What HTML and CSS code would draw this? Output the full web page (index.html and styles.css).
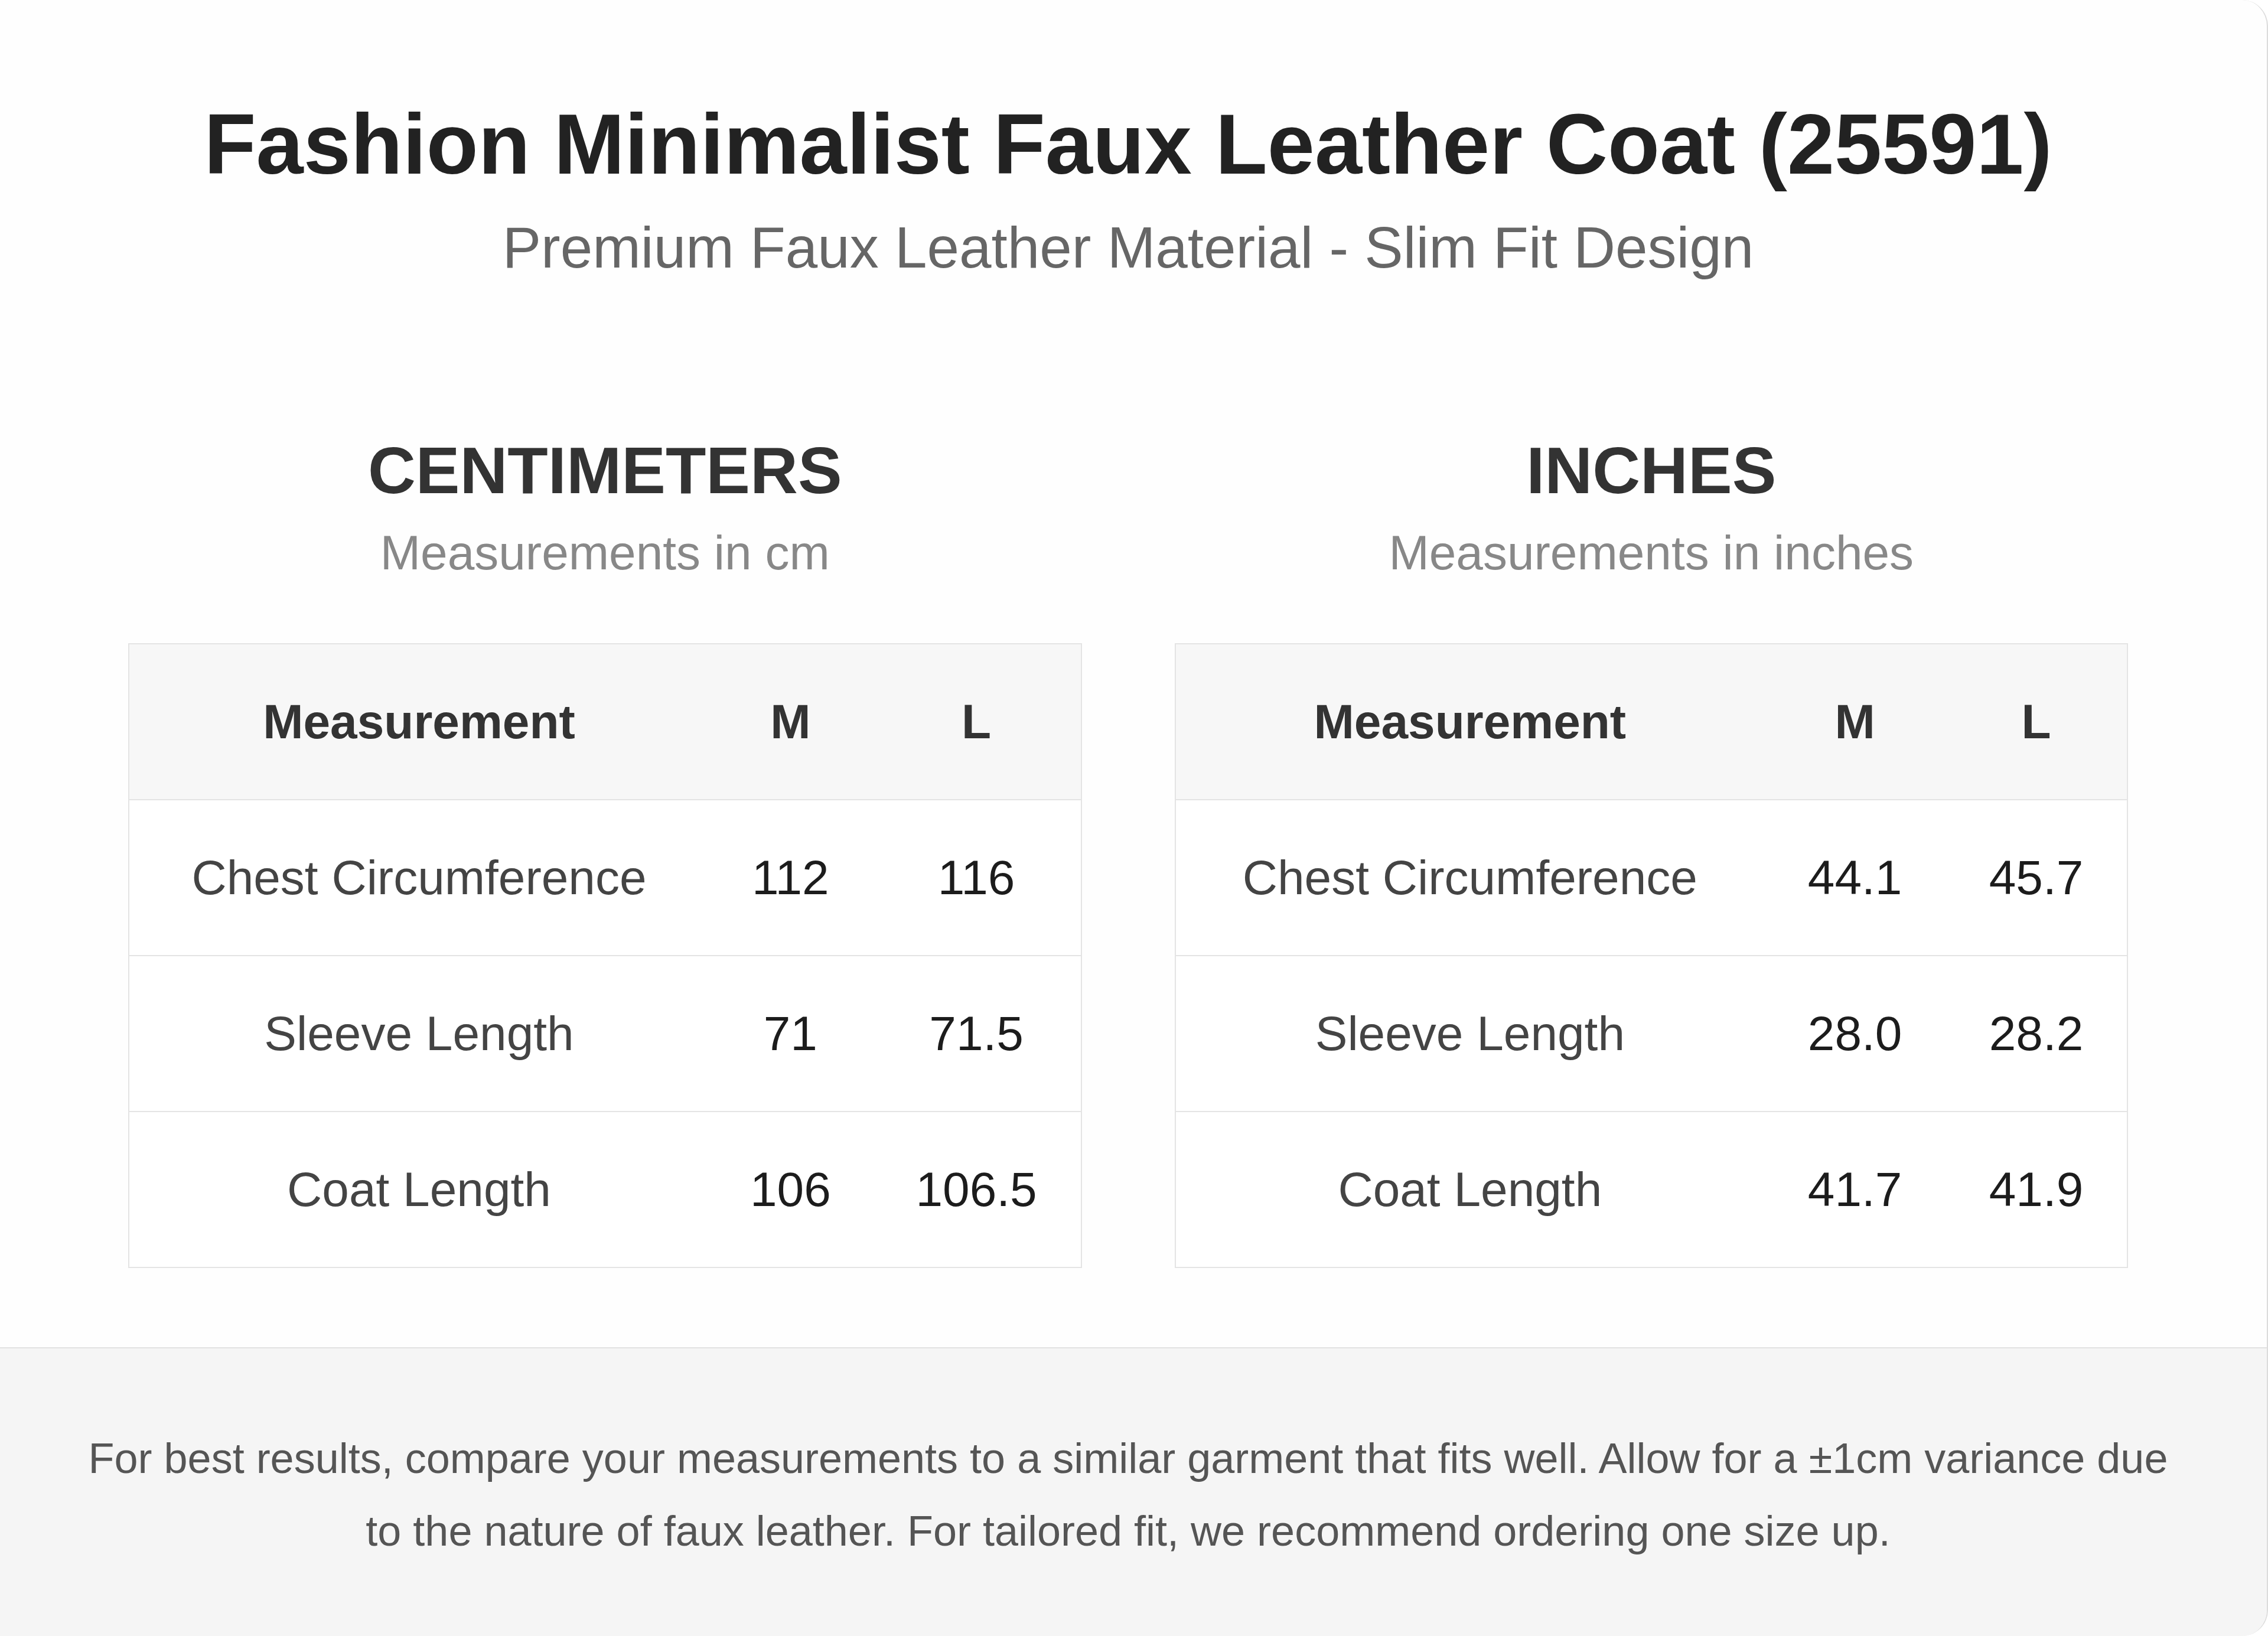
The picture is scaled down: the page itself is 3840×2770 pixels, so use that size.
FILE: index.html
```html
<!DOCTYPE html>
<html lang="en">
<head>
<meta charset="utf-8">
<title>Fashion Minimalist Faux Leather Coat (25591) - Size Chart</title>
<link rel="stylesheet" href="styles.css">
</head>
<body>
<div class="page">
  <header class="hero">
    <h1 class="title">Fashion Minimalist Faux Leather Coat (25591)</h1>
    <p class="subtitle">Premium Faux Leather Material - Slim Fit Design</p>
  </header>

  <main class="charts">
    <section class="chart">
      <h2 class="chart-title">CENTIMETERS</h2>
      <p class="chart-sub">Measurements in cm</p>
      <table class="size-table">
        <thead>
          <tr><th>Measurement</th><th>M</th><th>L</th></tr>
        </thead>
        <tbody>
          <tr><td class="label">Chest Circumference</td><td>112</td><td>116</td></tr>
          <tr><td class="label">Sleeve Length</td><td>71</td><td>71.5</td></tr>
          <tr><td class="label">Coat Length</td><td>106</td><td>106.5</td></tr>
        </tbody>
      </table>
    </section>

    <section class="chart">
      <h2 class="chart-title">INCHES</h2>
      <p class="chart-sub">Measurements in inches</p>
      <table class="size-table">
        <thead>
          <tr><th>Measurement</th><th>M</th><th>L</th></tr>
        </thead>
        <tbody>
          <tr><td class="label">Chest Circumference</td><td>44.1</td><td>45.7</td></tr>
          <tr><td class="label">Sleeve Length</td><td>28.0</td><td>28.2</td></tr>
          <tr><td class="label">Coat Length</td><td>41.7</td><td>41.9</td></tr>
        </tbody>
      </table>
    </section>
  </main>

  <footer class="note">
    <p class="note-text">For best results, compare your measurements to a similar garment that fits well. Allow for a ±1cm variance due to the nature of faux leather. For tailored fit, we recommend ordering one size up.</p>
  </footer>
</div>
</body>
</html>
```

FILE: styles.css
```css
* { box-sizing: border-box; }

html, body {
  margin: 0;
  padding: 0;
  background: #ffffff;
}

body {
  font-family: "Liberation Sans", Arial, sans-serif;
  width: 3840px;
  height: 2770px;
  overflow: hidden;
}

.page {
  width: 3840px;
  height: 2770px;
  background: #fefefe;
  border-right: 2px solid #dcdcdc;
  border-radius: 0 44px 44px 0;
  overflow: hidden;
  display: flex;
  flex-direction: column;
}

.hero {
  text-align: center;
  padding: 159px 18px 0 0;
}

.title {
  margin: 0;
  font-size: 144px;
  line-height: 1.2;
  font-weight: 700;
  color: #222222;
}

.subtitle {
  margin: 29px 0 0;
  font-size: 98px;
  line-height: 1.2;
  color: #666666;
}

.charts {
  display: grid;
  grid-template-columns: 1fr 1fr;
  column-gap: 157px;
  padding: 252px 235px 0 217px;
}

.chart {
  text-align: center;
}

.chart-title {
  margin: 0;
  font-size: 112px;
  line-height: 1.2;
  font-weight: 700;
  color: #333333;
}

.chart-sub {
  margin: 22px 0 0;
  font-size: 82px;
  line-height: 1.2;
  color: #888888;
}

.size-table {
  margin-top: 104px;
  width: 100%;
  border-collapse: collapse;
  border: 2px solid #e4e4e4;
  font-size: 82px;
  line-height: 96px;
}

.size-table th,
.size-table td {
  padding: 83px 56px;
  text-align: center;
  border-bottom: 2px solid #e4e4e4;
  white-space: nowrap;
}

.size-table th {
  background: #f7f7f7;
  font-weight: 700;
  color: #333333;
}

.size-table td {
  background: #ffffff;
  color: #1c1c1c;
}

.size-table td.label {
  color: #444444;
}

.note {
  margin-top: 134px;
  flex: 1;
  background: #f5f5f5;
  border-top: 2px solid #e2e2e2;
  padding: 125px 18px 0 0;
}

.note-text {
  margin: 0 auto;
  max-width: 3570px;
  text-align: center;
  font-size: 72px;
  line-height: 1.7;
  color: #555555;
}
```
